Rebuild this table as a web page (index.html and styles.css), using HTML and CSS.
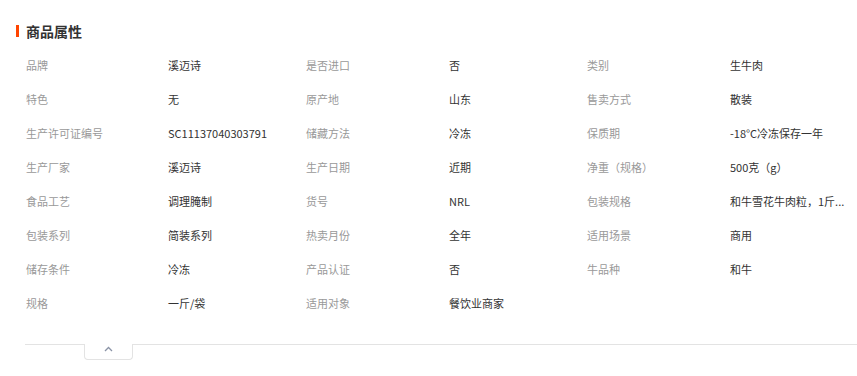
FILE: index.html
```html
<!DOCTYPE html>
<html lang="zh-CN">
<head>
<meta charset="utf-8">
<link rel="stylesheet" href="styles.css">
</head>
<body>
<section class="attrs">
  <h2 class="title">商品属性</h2>
  <div class="grid">
    <div class="label">品牌</div><div class="value">溪迈诗</div>
    <div class="label">是否进口</div><div class="value">否</div>
    <div class="label">类别</div><div class="value">生牛肉</div>

    <div class="label">特色</div><div class="value">无</div>
    <div class="label">原产地</div><div class="value">山东</div>
    <div class="label">售卖方式</div><div class="value">散装</div>

    <div class="label">生产许可证编号</div><div class="value">SC11137040303791</div>
    <div class="label">储藏方法</div><div class="value">冷冻</div>
    <div class="label">保质期</div><div class="value">-18°C冷冻保存一年</div>

    <div class="label">生产厂家</div><div class="value">溪迈诗</div>
    <div class="label">生产日期</div><div class="value">近期</div>
    <div class="label">净重（规格）</div><div class="value">500克（g）</div>

    <div class="label">食品工艺</div><div class="value">调理腌制</div>
    <div class="label">货号</div><div class="value">NRL</div>
    <div class="label">包装规格</div><div class="value">和牛雪花牛肉粒，1斤...</div>

    <div class="label">包装系列</div><div class="value">简装系列</div>
    <div class="label">热卖月份</div><div class="value">全年</div>
    <div class="label">适用场景</div><div class="value">商用</div>

    <div class="label">储存条件</div><div class="value">冷冻</div>
    <div class="label">产品认证</div><div class="value">否</div>
    <div class="label">牛品种</div><div class="value">和牛</div>

    <div class="label">规格</div><div class="value">一斤/袋</div>
    <div class="label">适用对象</div><div class="value">餐饮业商家</div>
  </div>
  <div class="fold">
    <button class="fold-tab" type="button" aria-label="收起">
      <svg width="9" height="6" viewBox="0 0 9 6"><path d="M1 5 L4.5 1.5 L8 5" fill="none" stroke="#8a93a6" stroke-width="1.3"/></svg>
    </button>
  </div>
</section>
</body>
</html>
```

FILE: styles.css
```css
* { box-sizing: border-box; }
body {
  margin: 0;
  background: #fff;
  font-family: "Noto Sans CJK SC", "Noto Sans", sans-serif;
  font-size: 11px;
}
.attrs {
  padding: 21px 0 0 16px;
}
.title {
  margin: 0;
  height: 20px;
  line-height: 20px;
  font-size: 14px;
  font-weight: bold;
  color: #333;
  display: flex;
  align-items: center;
}
.title::before {
  content: "";
  width: 3px;
  height: 12px;
  background: #ff4400;
  margin-right: 7px;
}
.grid {
  margin-top: 7px;
  padding-left: 10px;
  display: grid;
  grid-template-columns: 142px 138px 143px 138px 143px 1fr;
  grid-auto-rows: 34px;
  align-items: center;
}
.label {
  color: #999;
  white-space: nowrap;
}
.value {
  color: #333;
  white-space: nowrap;
}
.fold {
  margin: 24px 0 0 9px;
  border-top: 1px solid #e3e3e3;
  padding-left: 59px;
}
.fold-tab {
  display: flex;
  align-items: center;
  justify-content: center;
  width: 49px;
  height: 16px;
  margin-top: -1px;
  padding: 0 0 6px;
  background: #fff;
  border: 1px solid #e3e3e3;
  border-top: none;
  border-radius: 0 0 4px 4px;
  cursor: pointer;
}
```
